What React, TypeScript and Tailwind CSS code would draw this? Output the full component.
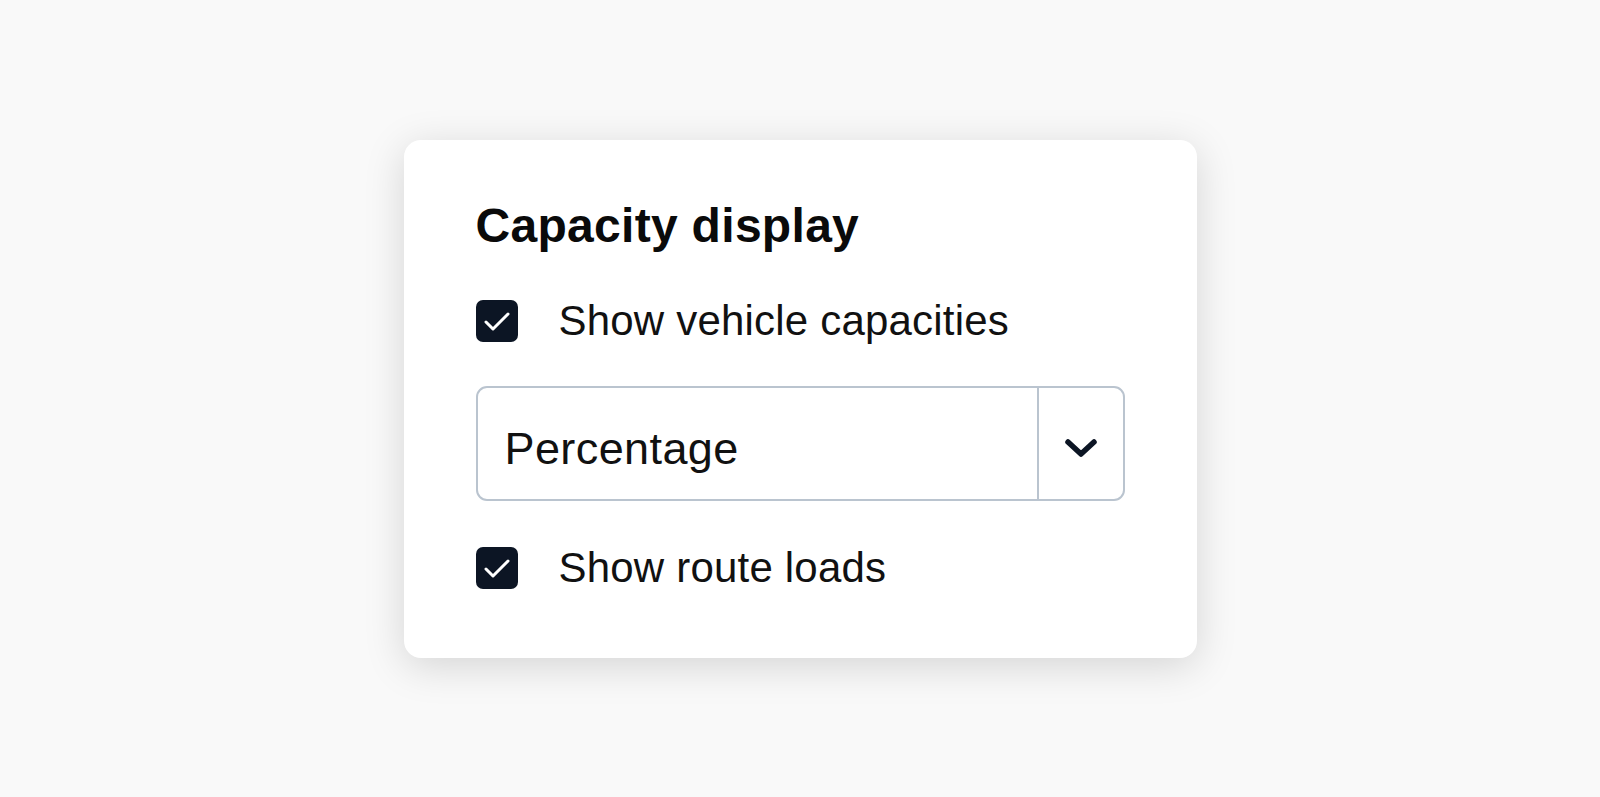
// Capacity display settings card
function CheckBox() {
  return (
    <div className="w-[42px] h-[42px] rounded-[7px] bg-[#0c1524] flex items-center justify-center shrink-0">
      <svg width="42" height="42" viewBox="0 0 42 42" fill="none">
        <polyline points="10,22 17,29 32,14" stroke="white" strokeWidth="3" strokeLinecap="round" strokeLinejoin="round" />
      </svg>
    </div>
  )
}

function CheckRow({ label }: { label: string }) {
  return (
    <label className="flex items-center gap-[41px]">
      <CheckBox />
      <span className="text-[42px] leading-none tracking-[0.2px] text-[#111]">{label}</span>
    </label>
  )
}

export default function App() {
  return (
    <div
      className="h-screen w-full bg-[#f9f9f9] flex items-center justify-center"
      style={{ fontFamily: '"Liberation Sans", Arial, sans-serif' }}
    >
      <div className="w-[793px] bg-white rounded-[17px] shadow-[0_8px_40px_rgba(0,0,0,0.15)] px-[72px] pt-[62px] pb-[69px] flex flex-col">
        <h2 className="text-[48px] leading-none font-bold tracking-[0.3px] text-[#0a0a0a]">Capacity display</h2>

        <div className="mt-[50px]">
          <CheckRow label="Show vehicle capacities" />
        </div>

        <div className="mt-[44px] h-[115px] flex border-2 border-[#bac4cf] rounded-[11px]">
          <div className="flex-1 flex items-center pl-[27px] pt-[11px] text-[45px] leading-none tracking-[0.4px] text-[#111]">
            Percentage
          </div>
          <div className="w-[86px] pt-[10px] border-l-2 border-[#bac4cf] flex items-center justify-center">
            <svg width="34" height="22" viewBox="0 0 34 22" fill="none">
              <polyline points="4,5 17,17 30,5" stroke="#0c1524" strokeWidth="5.5" strokeLinecap="round" strokeLinejoin="round" />
            </svg>
          </div>
        </div>

        <div className="mt-[46px]">
          <CheckRow label="Show route loads" />
        </div>
      </div>
    </div>
  )
}
